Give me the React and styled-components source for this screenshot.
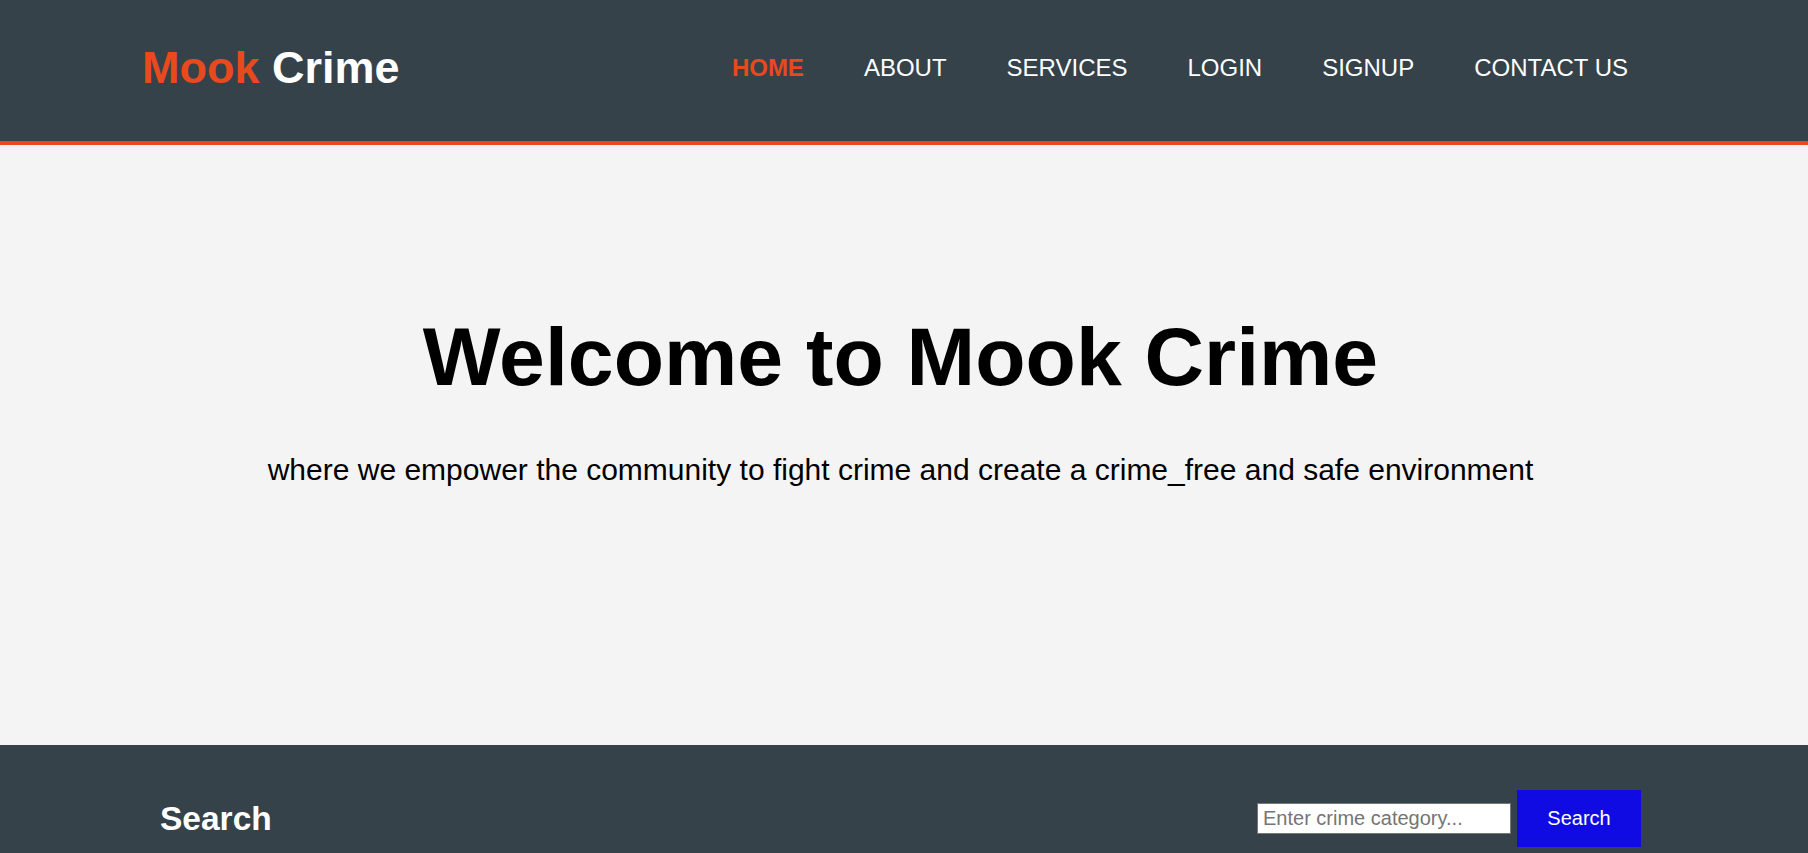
import styled, { createGlobalStyle } from 'styled-components';

const GlobalStyle = createGlobalStyle`
	body {
		margin: 0;
		padding: 0;
		font-family: 'Liberation Sans', Arial, Helvetica, sans-serif;
		background: #f4f4f4;
	}
	* {
		box-sizing: border-box;
	}
`;

const links = ['HOME', 'ABOUT', 'SERVICES', 'LOGIN', 'SIGNUP', 'CONTACT US'];

const App = () => {
	return (
		<>
			<GlobalStyle />
			<Header>
				<Branding>
					<span>Mook</span> Crime
				</Branding>
				<Nav>
					{links.map((l, i) => (
						<NavLink key={l} href="#" $current={i === 0}>
							{l}
						</NavLink>
					))}
				</Nav>
			</Header>
			<Showcase>
				<h1>Welcome to Mook Crime</h1>
				<p>where we empower the community to fight crime and create a crime_free and safe environment</p>
			</Showcase>
			<Footer>
				<FooterTitle>Search</FooterTitle>
				<SearchForm onSubmit={e => e.preventDefault()}>
					<SearchInput type="text" placeholder="Enter crime category..." />
					<SearchBtn type="submit">Search</SearchBtn>
				</SearchForm>
			</Footer>
		</>
	);
};

const Header = styled.header`
	height: 145px;
	background: #35424a;
	border-bottom: 4px solid #e8491d;
	display: flex;
	align-items: center;
	justify-content: space-between;
	padding: 0 180px 5px 142px;
`;
const Branding = styled.h1`
	margin: 0;
	font-size: 45px;
	font-weight: 700;
	color: #ffffff;
	span {
		color: #e8491d;
	}
`;
const Nav = styled.nav`
	display: flex;
	gap: 60px;
`;
const NavLink = styled.a`
	font-size: 24px;
	text-decoration: none;
	color: ${p => (p.$current ? '#e8491d' : '#ffffff')};
	font-weight: ${p => (p.$current ? 700 : 400)};
`;
const Showcase = styled.section`
	height: 600px;
	padding: 164px 7px 0 0;
	text-align: center;
	color: #000000;
	h1 {
		margin: 0;
		font-size: 82.4px;
		font-weight: 700;
	}
	p {
		margin: 49px 0 0 0;
		font-size: 30px;
	}
`;
const Footer = styled.footer`
	height: 146px;
	background: #35424a;
	display: flex;
	align-items: center;
	justify-content: space-between;
	padding: 0 167px 0 160px;
`;
const FooterTitle = styled.h2`
	margin: 0;
	padding-top: 2px;
	font-size: 33.5px;
	font-weight: 700;
	color: #ffffff;
`;
const SearchForm = styled.form`
	display: flex;
	align-items: center;
	gap: 6px;
`;
const SearchInput = styled.input`
	width: 254px;
	height: 31px;
	padding: 0 5px;
	font-family: inherit;
	font-size: 20px;
	border: 1px solid #767676;
	background: #ffffff;
	outline: none;
	&::placeholder {
		color: #757575;
	}
`;
const SearchBtn = styled.button`
	width: 124px;
	height: 57px;
	border: none;
	background: #110be3;
	color: #ffffff;
	font-family: inherit;
	font-size: 20px;
	cursor: pointer;
`;

export default App;
